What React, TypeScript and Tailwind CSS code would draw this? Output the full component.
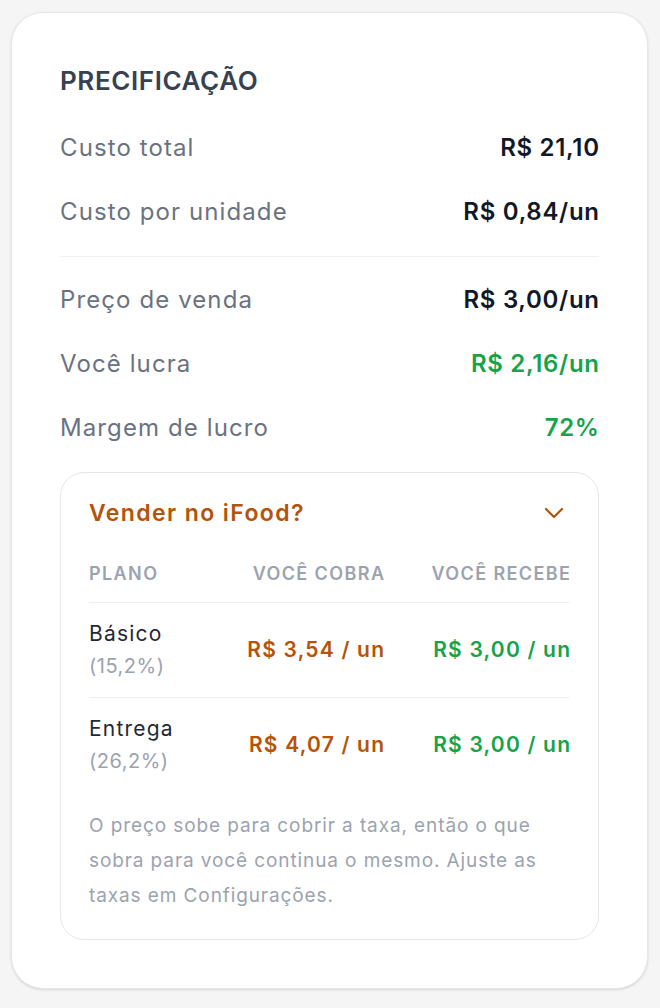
const font = { fontFamily: 'Inter, "Noto Sans", sans-serif' };

type Row = { label: string; value: string; tone?: 'dark' | 'green' };

const costRows: Row[] = [
  { label: 'Custo total', value: 'R$ 21,10' },
  { label: 'Custo por unidade', value: 'R$ 0,84/un' },
];

const saleRows: Row[] = [
  { label: 'Preço de venda', value: 'R$ 3,00/un' },
  { label: 'Você lucra', value: 'R$ 2,16/un', tone: 'green' },
  { label: 'Margem de lucro', value: '72%', tone: 'green' },
];

const plans = [
  { name: 'Básico', fee: '(15,2%)', charge: 'R$ 3,54 / un', receive: 'R$ 3,00 / un' },
  { name: 'Entrega', fee: '(26,2%)', charge: 'R$ 4,07 / un', receive: 'R$ 3,00 / un' },
];

function PriceRow({ row }: { row: Row }) {
  return (
    <div className="flex h-16 items-center justify-between">
      <span className="text-[24px] leading-8 tracking-[1.1px] text-[#6b7280]">{row.label}</span>
      <span
        className={
          row.tone === 'green'
            ? 'mr-[-0.7px] text-[24px] leading-8 font-semibold tracking-[0.7px] text-[#16a34a]'
            : 'mr-[-0.7px] text-[24px] leading-8 font-semibold tracking-[0.7px] text-[#111827]'
        }
      >
        {row.value}
      </span>
    </div>
  );
}

function Chevron() {
  return (
    <svg width="20" height="12" viewBox="0 0 20 12" fill="none" className="mr-[6px] text-[#b45309]">
      <polyline
        points="2,2 10,10 18,2"
        stroke="currentColor"
        strokeWidth="2.2"
        strokeLinecap="round"
        strokeLinejoin="round"
      />
    </svg>
  );
}

export default function App() {
  return (
    <div className="min-h-screen bg-[#f5f5f5] pl-[11px] pr-3 pt-3 pb-4" style={font}>
      <div className="rounded-[32px] border border-[#e5e7eb] bg-white px-12 pt-12 pb-12 shadow-sm">
        <h2 className="h-10 text-[26px] leading-10 font-semibold tracking-[0.6px] text-[#374151]">
          PRECIFICAÇÃO
        </h2>

        <div className="mt-[15px]">
          {costRows.map((r) => (
            <PriceRow key={r.label} row={r} />
          ))}
        </div>

        <div className="mt-3 mb-[11px] h-px bg-[#f0f0f3]" />

        <div>
          {saleRows.map((r) => (
            <PriceRow key={r.label} row={r} />
          ))}
        </div>

        <div className="mt-3 rounded-[24px] border border-[#e5e7eb] px-7 pt-7 pb-[26px]">
          <div className="flex h-6 items-center justify-between">
            <span className="text-[23px] leading-6 font-semibold tracking-[1.4px] text-[#b45309]">
              Vender no iFood?
            </span>
            <Chevron />
          </div>

          <div className="mt-[37px] grid grid-cols-[1fr_150px_186px] border-b border-[#f0f0f3] pb-4 text-[18px] leading-6 font-semibold uppercase tracking-[1.4px] text-[#9ca3af]">
            <span>Plano</span>
            <span className="mr-[-1.4px] text-right">Você cobra</span>
            <span className="mr-[-1.4px] text-right">Você recebe</span>
          </div>

          {plans.map((p, i) => (
            <div
              key={p.name}
              className={
                i === 0
                  ? 'grid grid-cols-[1fr_150px_186px] items-center border-b border-[#f0f0f3] py-[14px]'
                  : 'grid grid-cols-[1fr_150px_186px] items-center py-[14px]'
              }
            >
              <div className="flex flex-col">
                <span className="text-[21px] leading-[33px] tracking-[1.2px] text-[#1f2937]">{p.name}</span>
                <span className="text-[20px] leading-[33px] tracking-[0.5px] text-[#9ca3af]">{p.fee}</span>
              </div>
              <span className="mr-[-1.2px] text-right text-[21px] font-semibold tracking-[1.2px] text-[#b45309]">
                {p.charge}
              </span>
              <span className="mr-[-1.2px] text-right text-[21px] font-semibold tracking-[1.2px] text-[#16a34a]">
                {p.receive}
              </span>
            </div>
          ))}

          <p className="mt-4 text-[19px] leading-[35px] tracking-[0.9px] text-[#9ca3af]">
            O preço sobe para cobrir a taxa, então o que sobra para você continua o mesmo. Ajuste as
            taxas em Configurações.
          </p>
        </div>
      </div>
    </div>
  );
}
